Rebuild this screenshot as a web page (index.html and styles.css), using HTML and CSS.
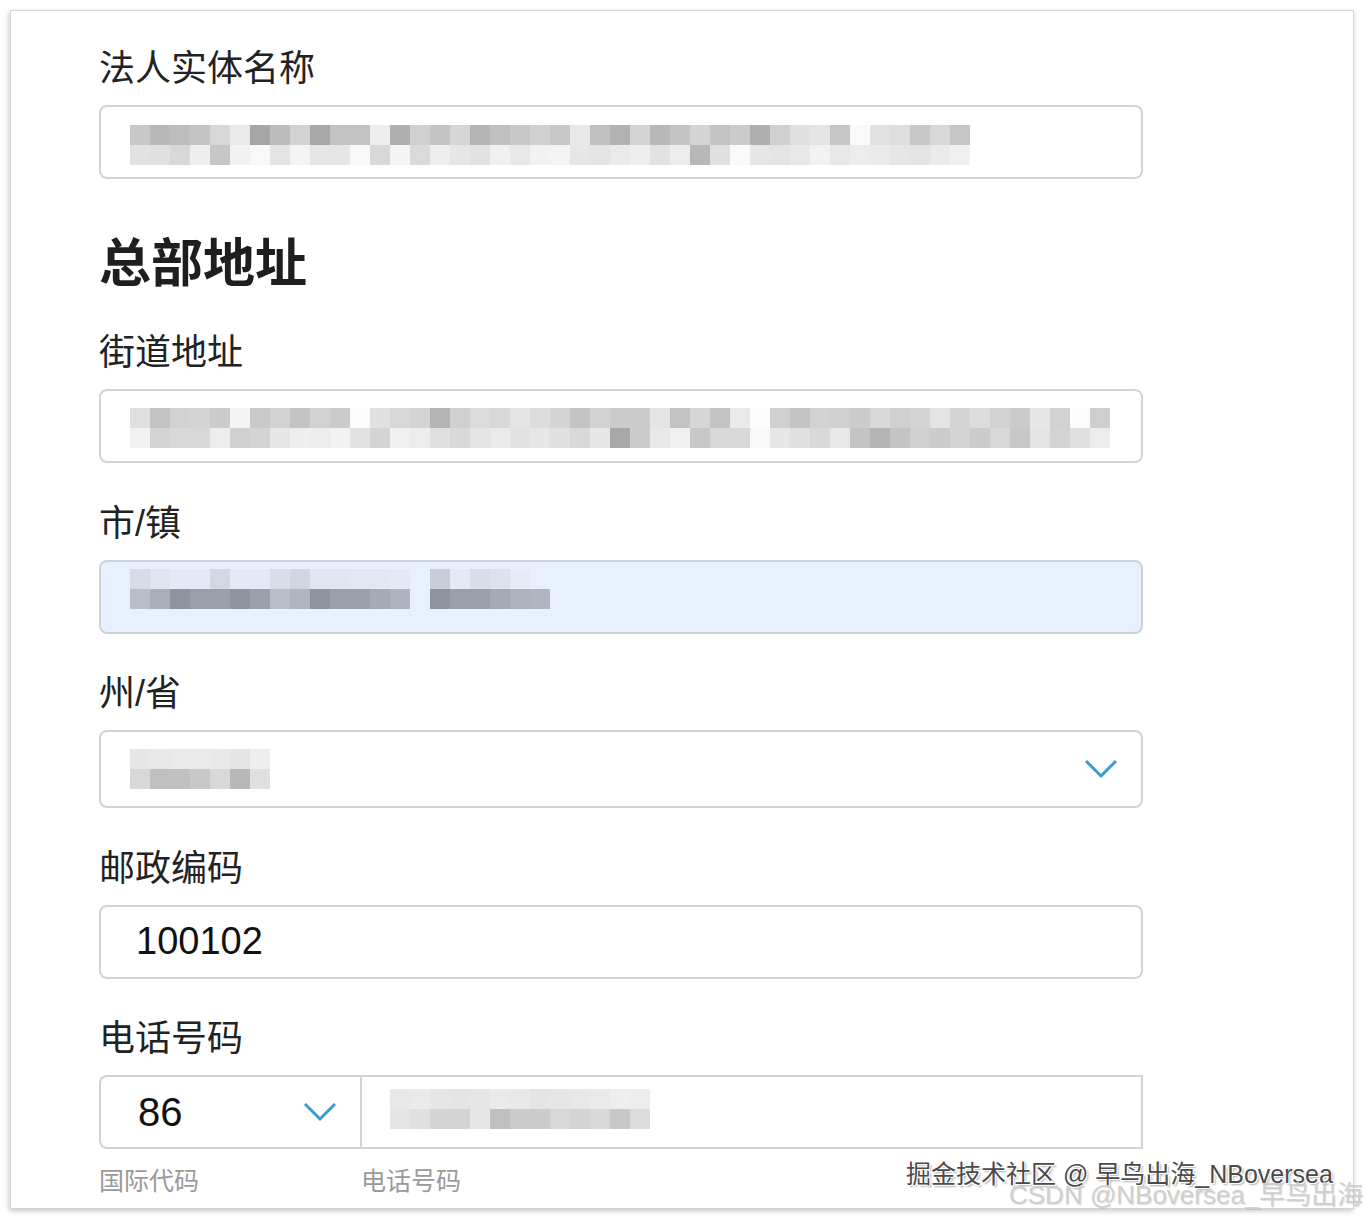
FILE: index.html
```html
<!DOCTYPE html>
<html lang="zh-CN">
<head>
<meta charset="utf-8">
<title>总部地址</title>
<link rel="stylesheet" href="styles.css">
</head>
<body>
<div class="frame">
  <div class="form">
    <div class="label first">法人实体名称</div>
    <div class="field"><span class="mosaic mz1"></span></div>

    <h2 class="heading">总部地址</h2>

    <div class="label after-heading">街道地址</div>
    <div class="field"><span class="mosaic mz2"></span></div>

    <div class="label">市/镇</div>
    <div class="field autofill"><span class="mosaic mz3"></span></div>

    <div class="label">州/省</div>
    <div class="field select"><span class="mosaic mz4"></span>
      <svg class="chev" viewBox="0 0 34 20" width="34" height="20"><polyline points="2,2 17,17 32,2" fill="none" stroke="#3a9bd5" stroke-width="3"/></svg>
    </div>

    <div class="label">邮政编码</div>
    <div class="field text">100102</div>

    <div class="label">电话号码</div>
    <div class="phone-row">
      <div class="field cc text">86
        <svg class="chev" viewBox="0 0 34 20" width="34" height="20"><polyline points="2,2 17,17 32,2" fill="none" stroke="#3a9bd5" stroke-width="3"/></svg>
      </div>
      <div class="field num"><span class="mosaic mz5"></span></div>
    </div>
    <div class="sub-row">
      <div class="sub cc-sub">国际代码</div>
      <div class="sub">电话号码</div>
    </div>
  </div>
</div>
<div class="wm wm1">掘金技术社区 @ 早鸟出海_NBoversea</div>
<div class="wm wm2">CSDN @NBoversea_早鸟出海</div>
</body>
</html>
```
FILE: styles.css
```css
body {
  margin: 0;
  background: #fff;
  font-family: "Liberation Sans", "Noto Sans CJK SC", sans-serif;
}

.frame {
  position: relative;
  margin: 10px;
  width: 1344px;
  height: 1199px;
  box-sizing: border-box;
  border: 1px solid #d4d4d4;
  box-shadow: -1px 2px 5px rgba(0, 0, 0, 0.22);
  padding: 34px 0 0 88px;
  background: #fff;
}

.form {
  width: 1044px;
}

.label {
  font-size: 36px;
  line-height: 48px;
  color: #222;
  margin: 36.5px 0 12px;
}
.label.first { margin-top: 0; }
.label.after-heading { margin-top: 0; }

.heading {
  font-size: 52px;
  line-height: 64px;
  font-weight: 700;
  color: #1e1e1e;
  margin: 53px 0 33px;
}

.field {
  height: 74px;
  box-sizing: border-box;
  border: 2px solid #d3d3d3;
  border-radius: 8px;
  display: flex;
  align-items: center;
  padding-left: 29px;
  background: #fff;
}

.field.text {
  padding-left: 35px;
  font-size: 38px;
  color: #111;
}

.field.cc.text {
  padding-left: 37px;
  font-size: 40px;
}

.field.autofill {
  background: #e8f0fe;
  border-color: #cdd1d9;
}

.field.select {
  height: 78px;
  justify-content: space-between;
  padding-right: 23px;
}

.chev { display: block; }

.phone-row {
  display: flex;
  height: 74px;
}
.field.cc {
  width: 261px;
  flex: none;
  border-radius: 8px 0 0 8px;
  border-right: none;
  justify-content: space-between;
  padding-right: 23px;
}
.field.num {
  flex: 1;
  border-radius: 0;
  padding-left: 28px;
}

.sub-row {
  display: flex;
  margin-top: 14px;
}
.sub {
  font-size: 25px;
  line-height: 36px;
  color: #9a9a9a;
}
.cc-sub { width: 262px; }

.mosaic {
  display: block;
  height: 40px;
  background-repeat: no-repeat;
  background-size: 100% 50%;
  background-position: left top, left bottom;
}

.mz1 {
  width: 840px;
  margin-top: 6px;
  background-image:
    linear-gradient(90deg, #c8c8c8 0 20px, #b8b8b8 20px 40px, #bdbdbd 40px 60px, #c4c4c4 60px 80px, #d8d8d8 80px 100px, #eaeaea 100px 120px, #a6a6a6 120px 140px, #bcbcbc 140px 160px, #d2d2d2 160px 180px, #a8a8a8 180px 200px, #c2c2c2 200px 220px, #c2c2c2 220px 240px, #eeeeee 240px 260px, #b0b0b0 260px 280px, #d0d0d0 280px 300px, #c4c4c4 300px 320px, #d6d6d6 320px 340px, #b4b4b4 340px 360px, #c0c0c0 360px 380px, #c8c8c8 380px 400px, #d0d0d0 400px 420px, #c8c8c8 420px 440px, #e8e8e8 440px 460px, #c0c0c0 460px 480px, #b2b2b2 480px 500px, #d4d4d4 500px 520px, #b8b8b8 520px 540px, #c4c4c4 540px 560px, #d4d4d4 560px 580px, #c4c4c4 580px 600px, #cccccc 600px 620px, #b0b0b0 620px 640px, #d0d0d0 640px 660px, #e0e0e0 660px 680px, #e4e4e4 680px 700px, #c6c6c6 700px 720px, #fafafa 720px 740px, #e2e2e2 740px 760px, #dedede 760px 780px, #c8c8c8 780px 800px, #d8d8d8 800px 820px, #c6c6c6 820px 840px),
    linear-gradient(90deg, #e2e2e2 0 20px, #e0e0e0 20px 40px, #d8d8d8 40px 60px, #eeeeee 60px 80px, #c6c6c6 80px 100px, #f2f2f2 100px 120px, #f8f8f8 120px 140px, #e4e4e4 140px 160px, #f4f4f4 160px 180px, #e6e6e6 180px 200px, #e6e6e6 200px 220px, #f8f8f8 220px 240px, #d8d8d8 240px 260px, #f4f4f4 260px 280px, #dadada 280px 300px, #eeeeee 300px 320px, #e6e6e6 320px 340px, #e2e2e2 340px 360px, #f0f0f0 360px 380px, #e8e8e8 380px 400px, #f2f2f2 400px 420px, #f4f4f4 420px 440px, #e6e6e6 440px 460px, #e4e4e4 460px 480px, #eaeaea 480px 500px, #eeeeee 500px 520px, #e2e2e2 520px 540px, #ececec 540px 560px, #b8b8b8 560px 580px, #e0e0e0 580px 600px, #fafafa 600px 620px, #e6e6e6 620px 640px, #e4e4e4 640px 660px, #e8e8e8 660px 680px, #f2f2f2 680px 700px, #e8e8e8 700px 720px, #ececec 720px 740px, #eaeaea 740px 760px, #e6e6e6 760px 780px, #e4e4e4 780px 800px, #eaeaea 800px 820px, #f0f0f0 820px 840px);
}

.mz2 {
  width: 980px;
  margin-top: 3px;
  background-image:
    linear-gradient(90deg, #e0e0e0 0 20px, #c4c4c4 20px 40px, #d2d2d2 40px 60px, #d4d4d4 60px 80px, #cccccc 80px 100px, #f4f4f4 100px 120px, #cacaca 120px 140px, #d2d2d2 140px 160px, #c4c4c4 160px 180px, #d2d2d2 180px 200px, #cccccc 200px 220px, #fcfcfc 220px 240px, #e0e0e0 240px 260px, #d8d8d8 260px 280px, #d4d4d4 280px 300px, #b4b4b4 300px 320px, #d0d0d0 320px 340px, #dcdcdc 340px 360px, #d8d8d8 360px 380px, #e4e4e4 380px 400px, #dcdcdc 400px 420px, #d4d4d4 420px 440px, #c4c4c4 440px 460px, #d2d2d2 460px 480px, #cccccc 480px 500px, #cccccc 500px 520px, #e4e4e4 520px 540px, #c2c2c2 540px 560px, #d6d6d6 560px 580px, #c4c4c4 580px 600px, #eaeaea 600px 620px, #fcfcfc 620px 640px, #d0d0d0 640px 660px, #c4c4c4 660px 680px, #d2d2d2 680px 700px, #d0d0d0 700px 720px, #cccccc 720px 740px, #d8d8d8 740px 760px, #d0d0d0 760px 780px, #d4d4d4 780px 800px, #e4e4e4 800px 820px, #d4d4d4 820px 840px, #dcdcdc 840px 860px, #d2d2d2 860px 880px, #cccccc 880px 900px, #e6e6e6 900px 920px, #d2d2d2 920px 940px, #fcfcfc 940px 960px, #cecece 960px 980px),
    linear-gradient(90deg, #f2f2f2 0 20px, #d4d4d4 20px 40px, #d8d8d8 40px 60px, #d8d8d8 60px 80px, #ececec 80px 100px, #d0d0d0 100px 120px, #d4d4d4 120px 140px, #e6e6e6 140px 160px, #eeeeee 160px 180px, #ececec 180px 200px, #f2f2f2 200px 220px, #e2e2e2 220px 240px, #d4d4d4 240px 260px, #f0f0f0 260px 280px, #ececec 280px 300px, #e0e0e0 300px 320px, #d8d8d8 320px 340px, #e4e4e4 340px 360px, #eaeaea 360px 380px, #e2e2e2 380px 400px, #e6e6e6 400px 420px, #e0e0e0 420px 440px, #d8d8d8 440px 460px, #e6e6e6 460px 480px, #a8a8a8 480px 500px, #cccccc 500px 520px, #e8e8e8 520px 540px, #f0f0f0 540px 560px, #c8c8c8 560px 580px, #d8d8d8 580px 600px, #d8d8d8 600px 620px, #f8f8f8 620px 640px, #e6e6e6 640px 660px, #e0e0e0 660px 680px, #d8d8d8 680px 700px, #e8e8e8 700px 720px, #c4c4c4 720px 740px, #b4b4b4 740px 760px, #c4c4c4 760px 780px, #d0d0d0 780px 800px, #cccccc 800px 820px, #d4d4d4 820px 840px, #cccccc 840px 860px, #d8d8d8 860px 880px, #c8c8c8 880px 900px, #e4e4e4 900px 920px, #d4d4d4 920px 940px, #e0e0e0 940px 960px, #ececec 960px 980px);
}

.mz3 {
  width: 420px;
  margin-top: -16px;
  background-image:
    linear-gradient(90deg, #d6dbe6 0 20px, #dfe4ee 20px 40px, #e4eaf5 40px 60px, #e4eaf5 60px 80px, #d2d8e2 80px 100px, #e4eaf5 100px 120px, #e4eaf5 120px 140px, #d8dde7 140px 160px, #d0d6e0 160px 180px, #e0e5ef 180px 200px, #e0e5ef 200px 220px, #e2e7f1 220px 240px, #e2e7f1 240px 260px, #e4e9f3 260px 280px, #e8f0fe 280px 300px, #c8ced8 300px 320px, #e4e9f3 320px 340px, #d8dee8 340px 360px, #dde2ec 360px 380px, #e6ebf6 380px 400px, #e8f0fe 400px 420px),
    linear-gradient(90deg, #b8bdc6 0 20px, #a8adb6 20px 40px, #8e939c 40px 60px, #9aa0aa 60px 80px, #9aa0aa 80px 100px, #8e939c 100px 120px, #9ba0a9 120px 140px, #b8bdc6 140px 160px, #b0b5bf 160px 180px, #8e939c 180px 200px, #9ba0a9 200px 220px, #9ba0a9 220px 240px, #a5aab4 240px 260px, #aeb3bd 260px 280px, #e8f0fe 280px 300px, #8e939c 300px 320px, #9aa0aa 320px 340px, #9aa0aa 340px 360px, #a5aab4 360px 380px, #aeb3bd 380px 400px, #b0b5bf 400px 420px);
}

.mz4 {
  width: 140px;
  background-image:
    linear-gradient(90deg, #e6e6e6 0 20px, #e8e8e8 20px 40px, #eaeaea 40px 60px, #eaeaea 60px 80px, #e8e8e8 80px 100px, #e4e4e4 100px 120px, #eeeeee 120px 140px),
    linear-gradient(90deg, #d8d8d8 0 20px, #c0c0c0 20px 40px, #c0c0c0 40px 60px, #c8c8c8 60px 80px, #d8d8d8 80px 100px, #b8b8b8 100px 120px, #e0e0e0 120px 140px);
}

.mz5 {
  width: 260px;
  margin-top: -6px;
  background-image:
    linear-gradient(90deg, #e8e8e8 0 20px, #eaeaea 20px 40px, #e6e6e6 40px 60px, #e4e4e4 60px 80px, #e6e6e6 80px 100px, #eaeaea 100px 120px, #e8e8e8 120px 140px, #e4e4e4 140px 160px, #e6e6e6 160px 180px, #e8e8e8 180px 200px, #eaeaea 200px 220px, #eeeeee 220px 240px, #ececec 240px 260px),
    linear-gradient(90deg, #e4e4e4 0 20px, #e0e0e0 20px 40px, #d4d4d4 40px 60px, #d4d4d4 60px 80px, #e6e6e6 80px 100px, #c0c0c0 100px 120px, #cccccc 120px 140px, #cccccc 140px 160px, #d8d8d8 160px 180px, #d4d4d4 180px 200px, #d8d8d8 200px 220px, #c8c8c8 220px 240px, #dcdcdc 240px 260px);
}

.wm {
  position: absolute;
  white-space: nowrap;
  line-height: 30px;
}
.wm1 {
  left: 906px;
  top: 1159px;
  font-size: 25px;
  color: #4a4a4a;
  text-shadow: 1px 1px 0 #fff, -1px -1px 0 #fff, 1px -1px 0 #fff, -1px 1px 0 #fff, 2px 2px 2px rgba(0, 0, 0, 0.35);
}
.wm2 {
  left: 1009px;
  top: 1180px;
  font-size: 26px;
  color: #cfcfcf;
  text-shadow: 1px 1px 1px rgba(0, 0, 0, 0.12);
}
```
